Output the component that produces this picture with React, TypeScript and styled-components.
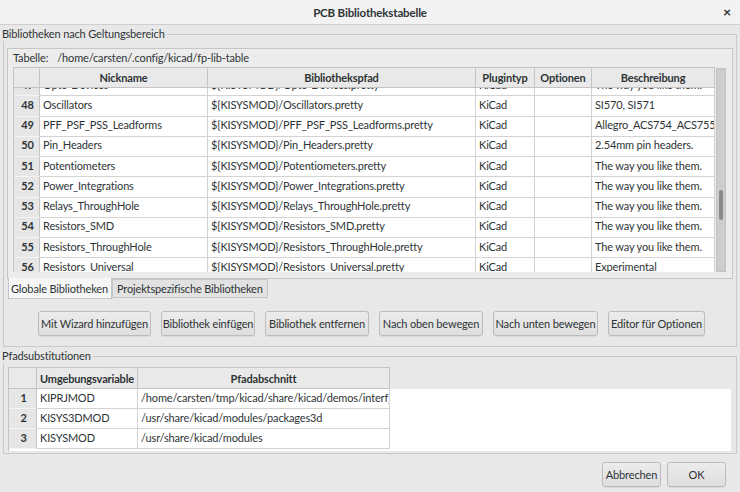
import React from 'react';
import styled, { createGlobalStyle } from 'styled-components';

const GlobalStyle = createGlobalStyle`
  html, body { margin: 0; padding: 0; }
  body {
    width: 740px; height: 492px; overflow: hidden; background: #e8e8e8;
    font-family: Lato, "Noto Sans", sans-serif; font-size: 11px; color: #2e3436;
    letter-spacing: -0.15px;
  }
  #root { width: 740px; height: 492px; }
  * { box-sizing: border-box; }
`;

const Dialog = styled.div`
  width: 740px; height: 492px; display: flex; flex-direction: column; background: #e8e8e8;
`;

const TitleBar = styled.div`
  height: 25px; flex: none; border-bottom: 1px solid #cfcfcf; background: #f2f2f2;
  display: grid; grid-template-columns: 1fr auto 1fr; align-items: center;
  font-weight: bold; font-size: 11.5px; color: #2e3436;
`;
const Title = styled.div`grid-column: 2;`;
const Close = styled.div`
  grid-column: 3; justify-self: end; margin-right: 9px; font-size: 14px; font-weight: bold; line-height: 1;
`;

const Group = styled.fieldset`
  margin: ${p => p.$top}px 3px 0 3px; padding: 0 ${p => p.$pad}px ${p => p.$bottom}px ${p => p.$pad}px;
  border: 1px solid #c9c9c9; min-width: 0;
`;
const Legend = styled.legend`
  padding: 0 2px 0 0; margin-left: -${p => p.$pad + 2}px; line-height: 14px; font-size: 11px; color: #2e3436;
`;

const Panel = styled.div`
  margin-top: 7px; border: 1px solid #c6c6c6; background: #ececec;
  padding: 0 6px 6px 5px; display: flex; flex-direction: column;
`;
const PathRow = styled.div`
  height: 18px; display: flex; align-items: center; gap: 9px; padding-bottom: 1px;
`;

const GridArea = styled.div`
  display: flex; height: 205px;
`;
const GridWindow = styled.div`
  width: 704px; background: #fff; border-top: 1px solid #c4c4c4; border-left: 1px solid #c4c4c4;
  display: flex; flex-direction: column; overflow: hidden;
`;
const Viewport = styled.div`
  flex: 1; overflow: hidden;
`;
const Scrolled = styled.div`
  margin-top: ${p => p.$offset}px;
`;
const Row = styled.div`
  display: grid; grid-template-columns: ${p => p.$cols}; height: ${p => p.$h}px; flex: none;
`;
const HeadCell = styled.div`
  background: #e9e9e9; border-right: 1px solid #c4c4c4; border-bottom: 1px solid #c4c4c4;
  ${p => p.$top ? 'border-top: 1px solid #c4c4c4;' : ''}
  font-weight: bold; display: flex; align-items: center; justify-content: center;
  white-space: nowrap; overflow: hidden; color: #2e3436;
`;
const LabelCell = styled.div`
  background: #e6e6e6; border-right: 1px solid #c4c4c4; border-bottom: 1px solid #f4f4f4;
  font-weight: bold; display: flex; align-items: center; justify-content: center; color: #2e3436;
  padding: 0 0 3px 2px;
`;
const Cell = styled.div`
  background: #fff; border-right: 1px solid #d3d3d3; border-bottom: 1px solid #d3d3d3;
  display: flex; align-items: center; padding: 0 0 3px 3px; white-space: nowrap; overflow: hidden;
  color: #2e3436;
`;

const Track = styled.div`
  width: 10px; margin-left: 1px; margin-top: 1px; background: #cdcdcd; border: 1px solid #c2c2c2;
  padding-left: 2px;
`;
const Thumb = styled.div`
  width: 4px; height: 30px; margin-top: ${p => p.$top}px; border-radius: 2px; background: #8a8a8a;
`;

const Tabs = styled.div`
  display: flex; align-items: flex-start; padding-left: 1px;
`;
const Tab = styled.div`
  height: ${p => p.$active ? 21 : 19}px; margin-top: ${p => p.$active ? -1 : 0}px;
  padding: 0 ${p => p.$active ? 3 : 4}px 0 ${p => p.$active ? 2 : 4}px;
  background: ${p => p.$active ? '#f6f6f6' : '#e2e2e2'};
  border: 1px solid #c6c6c6; border-top: ${p => p.$active ? 'none' : '1px solid #c6c6c6'};
  display: flex; align-items: center; white-space: nowrap; color: #2e3436;
`;

const ButtonRow = styled.div`
  display: flex; gap: 10px; padding-left: 31px; margin-top: 12px;
`;
const Button = styled.div`
  width: ${p => p.$w}px; height: 25px; flex: none;
  border: 1px solid #bcbcbc; border-radius: 3px;
  background: linear-gradient(#ececec, #dedede);
  box-shadow: 0 1px 0 rgba(0,0,0,0.06);
  display: flex; align-items: center; justify-content: center; white-space: nowrap; color: #2e3436;
`;

const SubGrid = styled.div`
  margin-top: 4px; height: 84px; display: flex; flex-direction: column; border-left: 1px solid #c4c4c4;
`;
const SubHead = styled.div`
  display: flex; background: #e8e8e8;
`;
const SubBody = styled.div`
  flex: 1; background: #fff; margin-right: 1px;
`;

const Footer = styled.div`
  display: flex; justify-content: flex-end; gap: 6px; margin: 8px 14px 0 0;
`;

const mainCols = '26px 168px 268px 59px 57px 123px';
const subCols = '28px 101px 252px';

const rows: [string, string, string, string][] = [
  ['47', 'Opto-Devices', '${KISYSMOD}/Opto-Devices.pretty', 'The way you like them.'],
  ['48', 'Oscillators', '${KISYSMOD}/Oscillators.pretty', 'SI570, SI571'],
  ['49', 'PFF_PSF_PSS_Leadforms', '${KISYSMOD}/PFF_PSF_PSS_Leadforms.pretty', 'Allegro_ACS754_ACS755_ACS756'],
  ['50', 'Pin_Headers', '${KISYSMOD}/Pin_Headers.pretty', '2.54mm pin headers.'],
  ['51', 'Potentiometers', '${KISYSMOD}/Potentiometers.pretty', 'The way you like them.'],
  ['52', 'Power_Integrations', '${KISYSMOD}/Power_Integrations.pretty', 'The way you like them.'],
  ['53', 'Relays_ThroughHole', '${KISYSMOD}/Relays_ThroughHole.pretty', 'The way you like them.'],
  ['54', 'Resistors_SMD', '${KISYSMOD}/Resistors_SMD.pretty', 'The way you like them.'],
  ['55', 'Resistors_ThroughHole', '${KISYSMOD}/Resistors_ThroughHole.pretty', 'The way you like them.'],
  ['56', 'Resistors_Universal', '${KISYSMOD}/Resistors_Universal.pretty', 'Experimental'],
];

const subRows = [
  ['1', 'KIPRJMOD', '/home/carsten/tmp/kicad/share/kicad/demos/interf_u'],
  ['2', 'KISYS3DMOD', '/usr/share/kicad/modules/packages3d'],
  ['3', 'KISYSMOD', '/usr/share/kicad/modules'],
];

const buttons: [string, number][] = [
  ['Mit Wizard hinzufügen', 113],
  ['Bibliothek einfügen', 94],
  ['Bibliothek entfernen', 104],
  ['Nach oben bewegen', 104],
  ['Nach unten bewegen', 105],
  ['Editor für Optionen', 97],
];

export default function App() {
  return (
    <>
      <GlobalStyle />
      <Dialog>
        <TitleBar>
          <Title>PCB Bibliothekstabelle</Title>
          <Close>×</Close>
        </TitleBar>

        <Group $top={2} $pad={3} $bottom={10}>
          <Legend $pad={3}>Bibliotheken nach Geltungsbereich</Legend>
          <Panel>
            <PathRow>
              <span>Tabelle:</span>
              <span>/home/carsten/.config/kicad/fp-lib-table</span>
            </PathRow>
            <GridArea>
              <GridWindow>
                <Row $cols={mainCols} $h={20}>
                  <HeadCell />
                  <HeadCell>Nickname</HeadCell>
                  <HeadCell>Bibliothekspfad</HeadCell>
                  <HeadCell>Plugintyp</HeadCell>
                  <HeadCell>Optionen</HeadCell>
                  <HeadCell>Beschreibung</HeadCell>
                </Row>
                <Viewport>
                  <Scrolled $offset={-12}>
                    {rows.map(r => (
                      <Row key={r[0]} $cols={mainCols} $h={20.25}>
                        <LabelCell>{r[0]}</LabelCell>
                        <Cell>{r[1]}</Cell>
                        <Cell>{r[2]}</Cell>
                        <Cell>KiCad</Cell>
                        <Cell />
                        <Cell>{r[3]}</Cell>
                      </Row>
                    ))}
                  </Scrolled>
                </Viewport>
              </GridWindow>
              <Track>
                <Thumb $top={121} />
              </Track>
            </GridArea>
          </Panel>
          <Tabs>
            <Tab $active>Globale Bibliotheken</Tab>
            <Tab>Projektspezifische Bibliotheken</Tab>
          </Tabs>
          <ButtonRow>
            {buttons.map(([t, w]) => (
              <Button key={t} $w={w}>{t}</Button>
            ))}
          </ButtonRow>
        </Group>

        <Group $top={2} $pad={4} $bottom={2}>
          <Legend $pad={4}>Pfadsubstitutionen</Legend>
          <SubGrid>
            <SubHead>
              <Row $cols={subCols} $h={22}>
                <HeadCell $top />
                <HeadCell $top>Umgebungsvariable</HeadCell>
                <HeadCell $top>Pfadabschnitt</HeadCell>
              </Row>
            </SubHead>
            <SubBody>
              {subRows.map(r => (
                <Row key={r[0]} $cols={subCols} $h={20}>
                  <LabelCell>{r[0]}</LabelCell>
                  <Cell>{r[1]}</Cell>
                  <Cell>{r[2]}</Cell>
                </Row>
              ))}
            </SubBody>
          </SubGrid>
        </Group>

        <Footer>
          <Button $w={59}>Abbrechen</Button>
          <Button $w={59}>OK</Button>
        </Footer>
      </Dialog>
    </>
  );
}
